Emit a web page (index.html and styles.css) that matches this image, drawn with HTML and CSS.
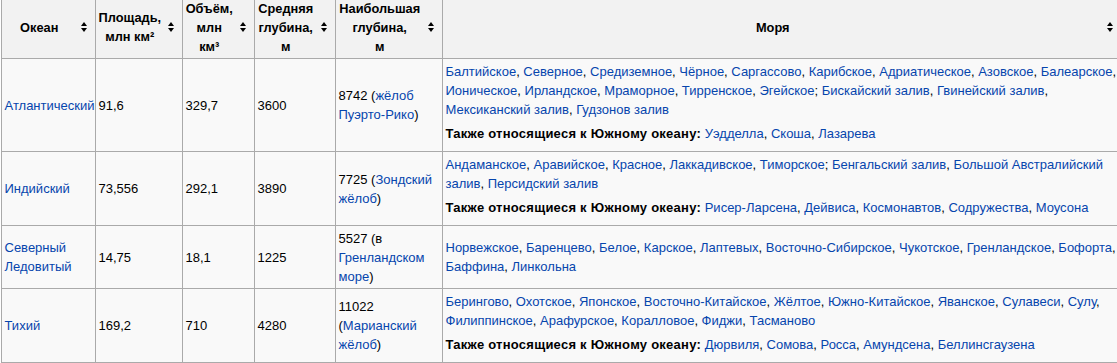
FILE: index.html
```html
<!DOCTYPE html>
<html lang="ru">
<head>
<meta charset="utf-8">
<title>Океаны</title>
<link rel="stylesheet" href="styles.css">
</head>
<body>
<table class="wikitable">
  <colgroup>
    <col class="c-ocean">
    <col class="c-area">
    <col class="c-vol">
    <col class="c-avg">
    <col class="c-max">
    <col class="c-seas">
  </colgroup>
  <thead>
    <tr>
      <th class="sort">Океан</th>
      <th class="sort">Площадь,<br>млн км²</th>
      <th class="sort">Объём,<br>млн<br>км³</th>
      <th class="sort">Средняя<br>глубина,<br>м</th>
      <th class="sort">Наибольшая<br>глубина,<br>м</th>
      <th class="sort">Моря</th>
    </tr>
  </thead>
  <tbody>
    <tr>
      <td><a href="#">Атлантический</a></td>
      <td>91,6</td>
      <td>329,7</td>
      <td>3600</td>
      <td>8742 (<a href="#">жёлоб Пуэрто-Рико</a>)</td>
      <td><a href="#">Балтийское</a>, <a href="#">Северное</a>, <a href="#">Средиземное</a>, <a href="#">Чёрное</a>, <a href="#">Саргассово</a>, <a href="#">Карибское</a>, <a href="#">Адриатическое</a>, <a href="#">Азовское</a>, <a href="#">Балеарское</a>, <a href="#">Ионическое</a>, <a href="#">Ирландское</a>, <a href="#">Мраморное</a>, <a href="#">Тирренское</a>, <a href="#">Эгейское</a>; <a href="#">Бискайский залив</a>, <a href="#">Гвинейский залив</a>, <a href="#">Мексиканский залив</a>, <a href="#">Гудзонов залив</a>
        <p class="also"><b>Также относящиеся к Южному океану:</b> <a href="#">Уэдделла</a>, <a href="#">Скоша</a>, <a href="#">Лазарева</a></p></td>
    </tr>
    <tr>
      <td><a href="#">Индийский</a></td>
      <td>73,556</td>
      <td>292,1</td>
      <td>3890</td>
      <td>7725 (<a href="#">Зондский жёлоб</a>)</td>
      <td><a href="#">Андаманское</a>, <a href="#">Аравийское</a>, <a href="#">Красное</a>, <a href="#">Лаккадивское</a>, <a href="#">Тиморское</a>; <a href="#">Бенгальский залив</a>, <a href="#">Большой Австралийский залив</a>, <a href="#">Персидский залив</a>
        <p class="also"><b>Также относящиеся к Южному океану:</b> <a href="#">Рисер-Ларсена</a>, <a href="#">Дейвиса</a>, <a href="#">Космонавтов</a>, <a href="#">Содружества</a>, <a href="#">Моусона</a></p></td>
    </tr>
    <tr>
      <td><a href="#">Северный Ледовитый</a></td>
      <td>14,75</td>
      <td>18,1</td>
      <td>1225</td>
      <td>5527 (в <a href="#">Гренландском море</a>)</td>
      <td><a href="#">Норвежское</a>, <a href="#">Баренцево</a>, <a href="#">Белое</a>, <a href="#">Карское</a>, <a href="#">Лаптевых</a>, <a href="#">Восточно-Сибирское</a>, <a href="#">Чукотское</a>, <a href="#">Гренландское</a>, <a href="#">Бофорта</a>, <a href="#">Баффина</a>, <a href="#">Линкольна</a></td>
    </tr>
    <tr>
      <td><a href="#">Тихий</a></td>
      <td>169,2</td>
      <td>710</td>
      <td>4280</td>
      <td>11022 (<a href="#">Марианский жёлоб</a>)</td>
      <td><a href="#">Берингово</a>, <a href="#">Охотское</a>, <a href="#">Японское</a>, <a href="#">Восточно-Китайское</a>, <a href="#">Жёлтое</a>, <a href="#">Южно-Китайское</a>, <a href="#">Яванское</a>, <a href="#">Сулавеси</a>, <a href="#">Сулу</a>, <a href="#">Филиппинское</a>, <a href="#">Арафурское</a>, <a href="#">Коралловое</a>, <a href="#">Фиджи</a>, <a href="#">Тасманово</a>
        <p class="also"><b>Также относящиеся к Южному океану:</b> <a href="#">Дюрвиля</a>, <a href="#">Сомова</a>, <a href="#">Росса</a>, <a href="#">Амундсена</a>, <a href="#">Беллинсгаузена</a></p></td>
    </tr>
  </tbody>
</table>
</body>
</html>
```

FILE: styles.css
```css
html, body {
  margin: 0;
  padding: 0;
  overflow: hidden;
  background: #ffffff;
}

body {
  font-family: "Liberation Sans", Arial, sans-serif;
  font-size: 13px;
  line-height: 19px;
  color: #000;
}

.wikitable {
  margin: -5px 0 0 1px;
  border-collapse: collapse;
  table-layout: fixed;
  width: 1120px;
  background: #f9f9f9;
  border: 1px solid #aaa;
}

.c-ocean { width: 94px; }
.c-area  { width: 87px; }
.c-vol   { width: 72px; }
.c-avg   { width: 81px; }
.c-max   { width: 107px; }
.c-seas  { width: 679px; }

.wikitable th,
.wikitable td {
  border: 1px solid #aaa;
  padding: 2.5px;
}

.wikitable td {
  text-align: left;
  vertical-align: middle;
}

.wikitable th {
  background: #f2f2f2;
  font-size: 12.8px;
  font-weight: bold;
  text-align: center;
  vertical-align: middle;
}

.wikitable th.sort {
  position: relative;
  padding-right: 21px;
}

.wikitable th.sort::before,
.wikitable th.sort::after {
  content: "";
  position: absolute;
  right: 8px;
  top: 50%;
  width: 0;
  height: 0;
  border-left: 3.5px solid transparent;
  border-right: 3.5px solid transparent;
}

.wikitable th.sort::before {
  margin-top: -5px;
  border-bottom: 4px solid #000;
}

.wikitable th.sort::after {
  margin-top: 1px;
  border-top: 4px solid #000;
}

a {
  color: #0645ad;
  text-decoration: none;
}

.also {
  margin: 5px 0 6px 0;
}

.also b {
  letter-spacing: 0.25px;
}
```
